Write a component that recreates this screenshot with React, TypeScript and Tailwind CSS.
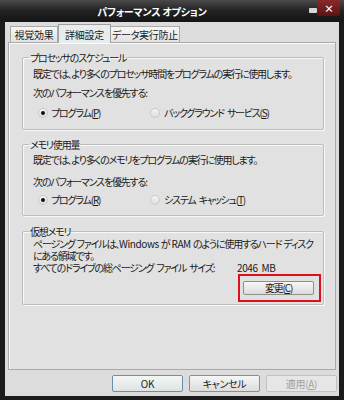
import React from 'react';

const jp = { fontFamily: '"Noto Sans CJK JP", "Noto Sans", sans-serif', fontFeatureSettings: '"palt"' };

function Radio({ checked }: { checked?: boolean }) {
  return (
    <span className="w-[10px] h-[10px] rounded-full border border-[#c8c8c8] bg-gradient-to-b from-[#f4f4f4] to-[#dedede] flex items-center justify-center shrink-0">
      {checked && <span className="w-[4px] h-[4px] rounded-full bg-[#111]" />}
    </span>
  );
}

function Acc({ k }: { k: string }) {
  return (
    <>
      (<span className="underline">{k}</span>)
    </>
  );
}

function Lat({ children }: { children: React.ReactNode }) {
  return <span className="tracking-[-0.4px]">{children}</span>;
}

function GroupBox({ title, children, className }: { title: string; children: React.ReactNode; className?: string }) {
  return (
    <fieldset className={`min-w-0 border border-[#bdbdbd] shadow-[inset_1px_1px_0_#f8f8f8,1px_1px_0_#f8f8f8] rounded-[2px] pl-[10px] pr-[2px] ${className ?? ''}`}>
      <legend className="px-[1px] ml-[-4px] leading-[13px]">{title}</legend>
      {children}
    </fieldset>
  );
}

export default function App() {
  return (
    <div className="w-[344px] h-[400px] bg-[#1b1b1b] flex flex-col text-[10px] tracking-[-1.2px] [word-spacing:2px] text-[#1a1a1a] overflow-hidden" style={jp}>
      {/* title bar */}
      <div className="h-[22px] shrink-0 bg-gradient-to-b from-[#4a4a4a] via-[#222] to-[#151515] flex items-center relative">
        <div className="flex-1 text-center text-white font-bold text-[10px] tracking-[-0.2px] [word-spacing:0] pr-[40px]">パフォーマンス オプション</div>
        <div className="absolute right-[27px] top-[8px] w-[8px] h-[5px] bg-[#d8d8d8] rounded-[1px]" />
        <div className="absolute right-[4px] top-0 w-[23px] h-[16px] bg-gradient-to-b from-[#8a2a2a] to-[#5a1414] rounded-b-[3px] flex items-center justify-center text-white text-[10px] font-bold">×</div>
      </div>

      {/* window body */}
      <div className="flex-1 mx-[5px] mb-[4px] bg-[#dcdcdc] flex flex-col">
        {/* tabs */}
        <div className="flex items-end pl-[5px] h-[20px] pt-[2px] tracking-[-0.3px]">
          <div className="h-[16px] w-[48px] border border-b-0 border-[#a9a9a9] bg-gradient-to-b from-[#f7f7f7] to-[#e2e2e2] flex items-center justify-center">視覚効果</div>
          <div className="h-[19px] w-[53px] border border-b-0 border-[#a0a0a0] bg-[#e7ecec] flex items-center justify-center relative top-[1px] z-10">詳細設定</div>
          <div className="h-[16px] w-[69px] border border-b-0 border-l-0 border-[#a9a9a9] bg-gradient-to-b from-[#f7f7f7] to-[#e2e2e2] flex items-center justify-center">データ実行防止</div>
        </div>

        {/* tab panel */}
        <div className="h-[328px] mx-[3px] border border-[#a9a9a9] bg-[#e1e1e1] shadow-[inset_1px_1px_0_#fafafa] pl-[13px] pr-[11px] pt-[8px] flex flex-col">
          <GroupBox title="プロセッサのスケジュール" className="h-[79px]">
            <div className="mt-[3px] leading-[13px] whitespace-nowrap">既定では、より多くのプロセッサ時間をプログラムの実行に使用します。</div>
            <div className="mt-[6px] leading-[13px]">次のパフォーマンスを優先する:</div>
            <div className="mt-[7px] flex items-center leading-[13px]">
              <div className="flex items-center gap-[3px] w-[117px] pl-[5px]">
                <Radio checked />
                <span>プログラム<Acc k="P" /></span>
              </div>
              <div className="flex items-center gap-[4px]">
                <Radio />
                <span>バックグラウンド サービス<Acc k="S" /></span>
              </div>
            </div>
          </GroupBox>

          <GroupBox title="メモリ使用量" className="h-[78px] mt-[8px]">
            <div className="mt-[2px] leading-[13px] whitespace-nowrap">既定では、より多くのメモリをプログラムの実行に使用します。</div>
            <div className="mt-[9px] leading-[13px]">次のパフォーマンスを優先する:</div>
            <div className="mt-[5px] flex items-center leading-[13px]">
              <div className="flex items-center gap-[3px] w-[117px] pl-[5px]">
                <Radio checked />
                <span>プログラム<Acc k="R" /></span>
              </div>
              <div className="flex items-center gap-[4px]">
                <Radio />
                <span>システム キャッシュ<Acc k="T" /></span>
              </div>
            </div>
          </GroupBox>

          <GroupBox title="仮想メモリ" className="h-[80px] mt-[9px]">
            <div className="leading-[12px] whitespace-nowrap [word-spacing:1px]">
              ページング ファイルは、<Lat>Windows</Lat> が <Lat>RAM</Lat> のように使用するハード ディスク
              <br />
              にある領域です。
            </div>
            <div className="flex leading-[12px] whitespace-nowrap">
              <span className="w-[204px]">すべてのドライブの総ページング ファイル サイズ:</span>
              <Lat>2046 MB</Lat>
            </div>
            <div className="flex justify-end">
              <div className="border-2 border-[#e0101a] pt-[5px] pb-[5px] pl-[3px] pr-[5px]">
                <button className="w-[71px] h-[14px] border border-[#8e8e8e] rounded-[2px] bg-gradient-to-b from-[#f6f6f6] to-[#dcdcdc] flex items-center justify-center leading-none">
                  変更<Acc k="C" />
                </button>
              </div>
            </div>
          </GroupBox>
        </div>

        {/* footer buttons */}
        <div className="flex justify-end gap-[6px] pr-[2px] mt-[5px] tracking-[-0.3px]">
          <button className="w-[71px] h-[17px] border border-[#6e8fa8] rounded-[2px] bg-gradient-to-b from-[#f4f6f6] to-[#dde3e3] flex items-center justify-center leading-none">OK</button>
          <button className="w-[71px] h-[17px] border border-[#8e8e8e] rounded-[2px] bg-gradient-to-b from-[#f6f6f6] to-[#dcdcdc] flex items-center justify-center leading-none">キャンセル</button>
          <button className="w-[71px] h-[17px] border border-[#c2c2c2] rounded-[2px] bg-[#e6e6e6] text-[#a0a0a0] flex items-center justify-center leading-none">
            適用<Acc k="A" />
          </button>
        </div>
      </div>
    </div>
  );
}
